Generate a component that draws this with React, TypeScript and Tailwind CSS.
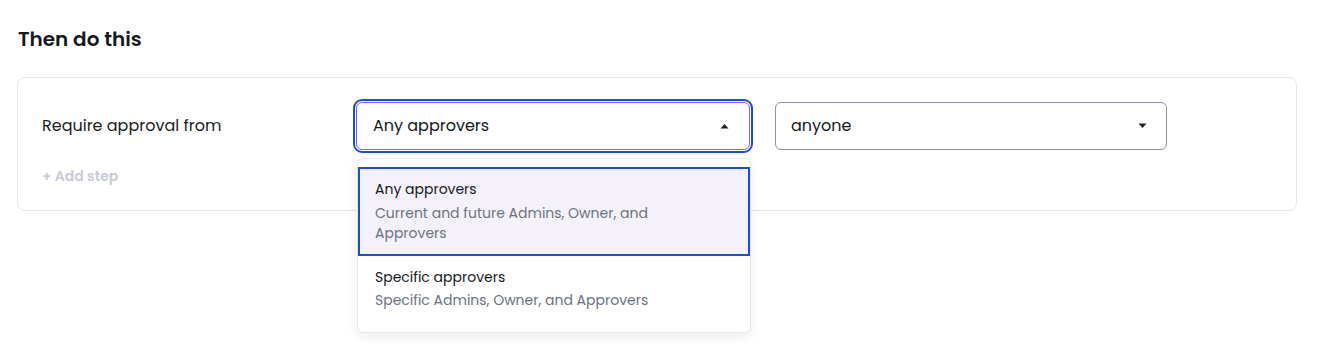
import React from "react";

const font = { fontFamily: "Poppins, 'Open Sans', 'Noto Sans', sans-serif" };

function Caret({ up }: { up?: boolean }) {
  return (
    <svg width="9" height="6" viewBox="0 0 9 6" className="shrink-0">
      {up ? (
        <path d="M0.5 5.5 L4.5 1 L8.5 5.5 Z" fill="#1f2328" />
      ) : (
        <path d="M0.5 0.5 L8.5 0.5 L4.5 5 Z" fill="#1f2328" />
      )}
    </svg>
  );
}

export default function App() {
  return (
    <div className="w-[1320px] h-[349px] bg-white text-[#14171c]" style={font}>
      <div className="pl-[17px] pr-[23px] pt-[25px]">
        <h2 className="pl-[1px] text-[20px] leading-[28px] font-semibold text-[#15181d]">
          Then do this
        </h2>
        <div className="mt-[24px] rounded-[8px] border border-[#e4e6ea] bg-white pl-[24px] pt-[24px] pb-[24px]">
          <div className="flex items-center">
            <div className="w-[314px] text-[16px] leading-[24px] text-[#1b1e23]">
              Require approval from
            </div>
            <div className="relative w-[394px]">
              <div className="flex h-[48px] items-center justify-between rounded-[6px] border border-[#8b5cf6] bg-white pl-[16px] pr-[20px] outline-2 outline-offset-1 outline-[#1a4fd1] outline-solid">
                <span className="text-[16px] text-[#16191e]">Any approvers</span>
                <Caret up />
              </div>
              <div className="absolute left-[1px] right-[-1px] top-[56px] z-10 rounded-[6px] border border-[#e6e8ec] bg-white py-[8px] shadow-[0_4px_12px_rgba(16,24,40,0.08)]">
                <div className="border-2 border-[#1a4fd1] bg-[#f4f1fb] px-[15px] pt-[9px] pb-[11px]">
                  <div className="text-[14px] leading-[22px] text-[#16191e]">Any approvers</div>
                  <div className="mt-[3px] w-[300px] text-[14px] leading-[20px] text-[#6e7381]">
                    Current and future Admins, Owner, and Approvers
                  </div>
                </div>
                <div className="px-[17px] pt-[10px] pb-[13px]">
                  <div className="text-[14px] leading-[22px] text-[#16191e]">Specific approvers</div>
                  <div className="mt-[1px] text-[14px] leading-[22px] text-[#6e7381]">
                    Specific Admins, Owner, and Approvers
                  </div>
                </div>
              </div>
            </div>
            <div className="ml-[25px] flex h-[48px] w-[392px] items-center justify-between rounded-[6px] border border-[#8a93a3] bg-white pl-[15px] pr-[19px]">
              <span className="text-[16px] text-[#16191e]">anyone</span>
              <Caret />
            </div>
          </div>
          <div className="mt-[16px] text-[14px] leading-[20px] font-semibold text-[#c8ccd5]">
            + Add step
          </div>
        </div>
      </div>
    </div>
  );
}
